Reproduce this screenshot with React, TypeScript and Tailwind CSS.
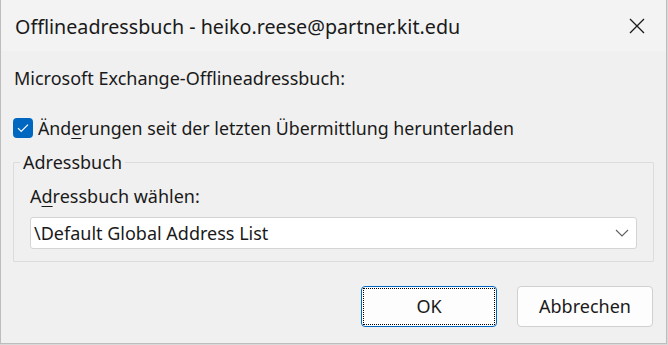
import React from "react";

function Chevron() {
  return (
    <svg width="14" height="8" viewBox="0 0 14 8" fill="none">
      <path d="M1 1l6 6 6-6" stroke="#5f5f5f" strokeWidth="1.1" />
    </svg>
  );
}

function CloseIcon() {
  return (
    <svg width="16" height="16" viewBox="0 0 16 16" fill="none">
      <path d="M1 1l14 14M15 1L1 15" stroke="#1a1a1a" strokeWidth="1.3" />
    </svg>
  );
}

export default function App() {
  return (
    <div
      className="w-[668px] h-[345px] bg-[#d9d9d9] text-[#1a1a1a]"
      style={{ fontFamily: '"Noto Sans", "Open Sans", sans-serif' }}
    >
      <div className="w-[667px] h-[344px] flex flex-col bg-[#f0f0f0] border border-[#bdbdbd] border-t-0">
        {/* title bar */}
        <div className="h-[51px] shrink-0 bg-[#f3f3f3] flex items-center pl-[14px] pr-[21px]">
          <div className="flex-1 text-[19.7px] leading-none pt-[2px]">
            Offlineadressbuch - heiko.reese@partner.kit.edu
          </div>
          <CloseIcon />
        </div>

        <div className="flex-1 px-[12px] pt-[15px]">
          <div className="text-[18px] leading-[24px] pl-[1px]">
            Microsoft Exchange-Offlineadressbuch:
          </div>

          <label className="mt-[26px] flex items-center gap-[5px] text-[17.8px] leading-[24px]">
            <span className="w-[20px] h-[20px] rounded-[4px] bg-[#0067c0] flex items-center justify-center">
              <svg width="12" height="10" viewBox="0 0 12 10" fill="none">
                <path d="M1 5.2l3.2 3.2L11 1.6" stroke="#fff" strokeWidth="1.2" />
              </svg>
            </span>
            <span>
              Änd<span className="underline underline-offset-[3px]">e</span>rungen seit der letzten Übermittlung herunterladen
            </span>
          </label>

          <fieldset className="mt-[12px] border border-[#dcdcdc] pb-[12px] rounded-[1px]">
            <legend className="ml-[6px] px-[3px] text-[18px] leading-[20px]">Adressbuch</legend>
            <div className="px-[16px] pt-[12px]">
              <div className="text-[18px] leading-[24px]">
                A<span className="underline underline-offset-[3px]">d</span>ressbuch wählen:
              </div>
              <div className="mt-[9px] h-[32px] bg-white border border-[#d4d4d4] rounded-[3px] flex items-center pl-[3px] pr-[7px] text-[18px]">
                <span className="flex-1">\Default Global Address List</span>
                <Chevron />
              </div>
            </div>
          </fieldset>

          <div className="mt-[24px] flex justify-end gap-[20px] pr-[1px]">
            <button className="w-[136px] h-[41px] bg-[#fdfdfd] border border-[#0067c0] rounded-[4px] p-[1px] text-[18px]">
              <span className="w-full h-full flex items-center justify-center border border-dotted border-black">
                OK
              </span>
            </button>
            <button className="w-[136px] h-[41px] bg-[#fdfdfd] border border-[#d0d0d0] rounded-[4px] text-[18px]">
              Abbrechen
            </button>
          </div>
        </div>
      </div>
    </div>
  );
}
